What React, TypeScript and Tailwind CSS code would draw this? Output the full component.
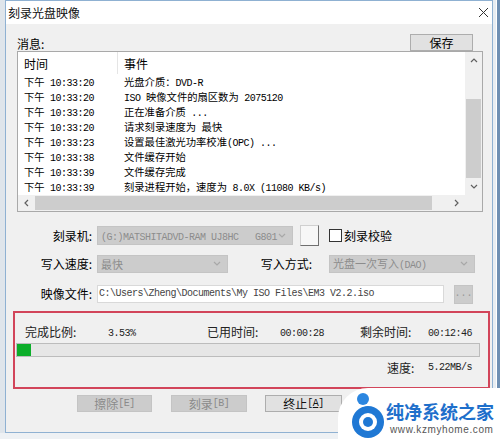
import React from "react";

const cjk = "font-['Noto_Sans_CJK_SC',sans-serif]";
const mono = "font-['Liberation_Mono',monospace]";

const CJK_RE = /([\u2E80-\u9FFF\uFF00-\uFFEF\u3000-\u303F]+)/;

// mixes a CJK font for Chinese runs with a narrow mono face for Latin runs
function Mixed({ text, zh, lat }: { text: string; zh: string; lat: string }) {
  const parts = text.split(CJK_RE);
  return (
    <>
      {parts.map((p, i) =>
        p === "" ? null : (
          <span key={i} className={i % 2 === 1 ? zh : lat}>
            {p}
          </span>
        )
      )}
    </>
  );
}

const ZH_LIST = "text-[10.3px] font-['Noto_Sans_CJK_SC',sans-serif]";
const LAT = "text-[10px] tracking-[-0.5px] whitespace-pre font-['Liberation_Mono',monospace]";

const rows: [string, string][] = [
  ["10:33:20", "光盘介质：DVD-R"],
  ["10:33:20", "ISO 映像文件的扇区数为 2075120"],
  ["10:33:20", "正在准备介质 ..."],
  ["10:33:20", "请求刻录速度为 最快"],
  ["10:33:23", "设置最佳激光功率校准(OPC) ..."],
  ["10:33:38", "文件缓存开始"],
  ["10:33:39", "文件缓存完成"],
  ["10:33:39", "刻录进程开始，速度为 8.0X (11080 KB/s)"],
];

function Chevron({ dir, color = "#606060" }: { dir: "up" | "down" | "left" | "right"; color?: string }) {
  const pts = {
    up: "1,5 4,2 7,5",
    down: "1,2 4,5 7,2",
    left: "5,1 2,4 5,7",
    right: "2,1 5,4 2,7",
  }[dir];
  return (
    <svg width="8" height="8" viewBox="0 0 8 8">
      <polyline points={pts} fill="none" stroke={color} strokeWidth="1.2" />
    </svg>
  );
}

function Select({ w, text, h = "h-[18px]" }: { w: string; text: string; h?: string }) {
  return (
    <div className={`${w} ${h} flex items-center bg-[#cccccc] border border-[#c4c4c4] pl-[3px] pr-[6px] text-[#8c8c8c]`}>
      <div className="flex-1 whitespace-nowrap leading-[15px]">
        <Mixed text={text} zh="text-[11px] font-['Noto_Sans_CJK_SC',sans-serif]" lat={LAT} />
      </div>
      <Chevron dir="down" color="#a8a8a8" />
    </div>
  );
}

export default function App() {
  return (
    <div className={`relative w-[500px] h-[439px] overflow-hidden bg-[#eef1f4] flex flex-col ${cjk}`}>
      <div className="flex h-[433px]">
        <div className="w-[5px] bg-[#dfe5eb]" />
        {/* window */}
        <div className="w-[488px] flex flex-col border-x border-b border-[#8fb1d2] bg-[#f0f0f0]">
          <div className="h-[24px] bg-white flex items-center pl-[2px] pr-[3px] border-t border-[#8fb1d2]">
            <span className="flex-1 text-[12px] text-[#111] leading-none">刻录光盘映像</span>
            <svg width="11" height="11" viewBox="0 0 11 11">
              <path d="M1 1 L10 10 M10 1 L1 10" stroke="#333" strokeWidth="1" />
            </svg>
          </div>

          <div className="flex flex-col pl-[11px] pr-[9px]">
            <div className="mt-[10px] h-[17px] flex items-end pr-[10px]">
              <span className="flex-1 text-[12px] leading-[14px]">消息:</span>
              <div className="w-[63px] h-[17px] bg-[#e1e1e1] border border-[#adadad] flex items-center justify-center text-[12px] leading-none">
                保存
              </div>
            </div>

            {/* message list */}
            <div className="h-[161px] border border-[#a9a9a9] bg-white flex flex-col">
              <div className="flex h-[143px]">
                <div className="flex-1 flex flex-col">
                  <div className="h-[22px] flex items-center text-[12px] leading-[15px]">
                    <div className="w-[100px] h-full pl-[6px] flex items-center border-r border-[#e5e5e5]">时间</div>
                    <div className="pl-[6px]">事件</div>
                  </div>
                  <div className="-mt-[2px] flex flex-col">
                    {rows.map(([t, e], i) => (
                      <div key={i} className="h-[15px] flex whitespace-nowrap">
                        <div className="w-[106px] pl-[6px] leading-[15px]">
                          <Mixed text={`下午 ${t}`} zh={ZH_LIST} lat={LAT} />
                        </div>
                        <div className="leading-[15px]">
                          <Mixed text={e} zh={ZH_LIST} lat={LAT} />
                        </div>
                      </div>
                    ))}
                  </div>
                </div>
                <div className="w-[17px] bg-[#f0f0f0] flex flex-col">
                  <div className="h-[17px] flex items-center justify-center">
                    <Chevron dir="up" />
                  </div>
                  <div className="h-[30px]" />
                  <div className="h-[79px] mx-[1px] bg-[#cdcdcd]" />
                  <div className="flex-1" />
                  <div className="h-[17px] flex items-center justify-center">
                    <Chevron dir="down" />
                  </div>
                </div>
              </div>
              <div className="h-[16px] flex bg-[#f0f0f0]">
                <div className="w-[17px] flex items-center justify-center">
                  <Chevron dir="left" />
                </div>
                <div className="w-[397px] my-[1px] bg-[#cdcdcd]" />
                <div className="flex-1" />
                <div className="w-[17px] flex items-center justify-center">
                  <Chevron dir="right" />
                </div>
                <div className="w-[17px] bg-[#f0f0f0]" />
              </div>
            </div>

            {/* settings */}
            <div className="mt-[13px] h-[21px] flex items-center text-[12px] leading-[16px]">
              <div className="w-[75px] text-right">刻录机:</div>
              <div className="ml-[5px]">
                <Select w="w-[196px]" h="h-[19px]" text="(G:)MATSHITADVD-RAM UJ8HC   G801" />
              </div>
              <div className="ml-[7px] w-[19px] h-[21px] bg-[#f7f7f7] border border-[#d0d0d0] border-r-[#6f6f6f] border-b-[#6f6f6f]" />
              <div className="ml-[10px] w-[13px] h-[13px] bg-white border border-[#333]" />
              <div className="ml-[2px]">刻录校验</div>
            </div>

            <div className="mt-[9px] h-[18px] flex items-center text-[12px] leading-[16px]">
              <div className="w-[75px] text-right">写入速度:</div>
              <div className="ml-[5px]">
                <Select w="w-[131px]" text="最快" />
              </div>
              <div className="w-[84px] text-right">写入方式:</div>
              <div className="ml-[17px]">
                <Select w="w-[146px]" text="光盘一次写入(DAO)" />
              </div>
            </div>

            <div className="mt-[11px] h-[20px] flex items-center text-[12px] leading-[16px]">
              <div className="w-[75px] text-right">映像文件:</div>
              <div className="ml-[5px] w-[347px] h-[18px] bg-white border border-[#d9d9d9] flex items-center pl-[1px] text-[#444]">
                <span className={LAT}>C:\Users\Zheng\Documents\My ISO Files\EM3 V2.2.iso</span>
              </div>
              <div className={`ml-[10px] w-[19px] h-[19px] bg-[#cccccc] border border-[#c4c4c4] flex items-center justify-center text-[10px] text-[#999] ${mono}`}>
                ...
              </div>
            </div>

            {/* progress area, outlined in red */}
            <div className="mt-[7px] ml-[-4px] mr-[-7px] h-[78px] border-2 border-[#d2455a] flex flex-col">
              <div className="mt-[12px] h-[14px] pl-[10px] flex items-center text-[12px] leading-[14px] text-[#222] whitespace-nowrap">
                <div className="w-[83px]">完成比例:</div>
                <div className="w-[99px]"><span className={LAT}>3.53%</span></div>
                <div className="w-[73px]">已用时间:</div>
                <div className="w-[80px]"><span className={LAT}>00:00:28</span></div>
                <div className="w-[68px]">剩余时间:</div>
                <div><span className={LAT}>00:12:46</span></div>
              </div>
              <div className="mt-[4px] ml-[1px] w-[464px] h-[14px] border border-[#bcbcbc] bg-[#e6e6e6] flex">
                <div className="w-[14px] h-full bg-[#0cae2a]" />
              </div>
              <div className="mt-[4px] h-[14px] pl-[372px] flex items-center text-[12px] leading-[14px] text-[#222]">
                <div className="w-[41px]">速度:</div>
                <span className={LAT}>5.22MB/s</span>
              </div>
            </div>

            {/* action buttons */}
            <div className="mt-[6px] h-[17px] flex text-[12px] leading-[15px]">
              <div className="ml-[60px] w-[75px] h-full bg-[#cccccc] border border-[#c4c4c4] flex items-center justify-center text-[#8a8a8a]">
                <Mixed text="擦除[E]" zh="" lat={LAT} />
              </div>
              <div className="ml-[19px] w-[76px] h-full bg-[#cccccc] border border-[#c4c4c4] flex items-center justify-center text-[#8a8a8a]">
                <Mixed text="刻录[B]" zh="" lat={LAT} />
              </div>
              <div className="ml-[18px] w-[77px] h-full bg-[#e1e1e1] border border-[#adadad] flex items-center justify-center text-[#111]">
                <span>终止</span>
                <span className={LAT}>[</span>
                <span className={`${LAT} underline`}>A</span>
                <span className={LAT}>]</span>
              </div>
            </div>
          </div>
        </div>
        <div className="flex-1 bg-white border-l-[3px] border-[#e8edf2] flex">
          <div className="ml-auto w-[3px] bg-[#6e8fb3]" />
        </div>
      </div>
      <div className="flex-1 bg-[#eef1f4]" />

      {/* site watermark over the corner */}
      <div className="absolute left-[338px] top-[388px] w-[162px] h-[51px] bg-white rounded-tl-[30px]">
        <svg className="absolute left-[10px] top-[3px]" width="40" height="48" viewBox="0 0 40 48">
          <circle cx="20" cy="31" r="16" fill="#1f78d4" />
          <circle cx="20" cy="31" r="9" fill="white" />
          <circle cx="20" cy="31" r="5" fill="#1f78d4" />
          <circle cx="15" cy="8" r="7.5" fill="white" />
          <circle cx="15" cy="8" r="6" fill="#2b86e0" />
        </svg>
        <div className="absolute left-[48px] top-[12px] text-[18px] leading-[22px] font-bold text-[#1e6fcb] whitespace-nowrap">
          纯净系统之家
        </div>
        <div className="absolute left-[52px] top-[36px] text-[10px] leading-[12px] text-[#555] tracking-[0.6px] font-['Liberation_Sans',sans-serif]">
          www.kzmyhome.com
        </div>
      </div>
    </div>
  );
}
